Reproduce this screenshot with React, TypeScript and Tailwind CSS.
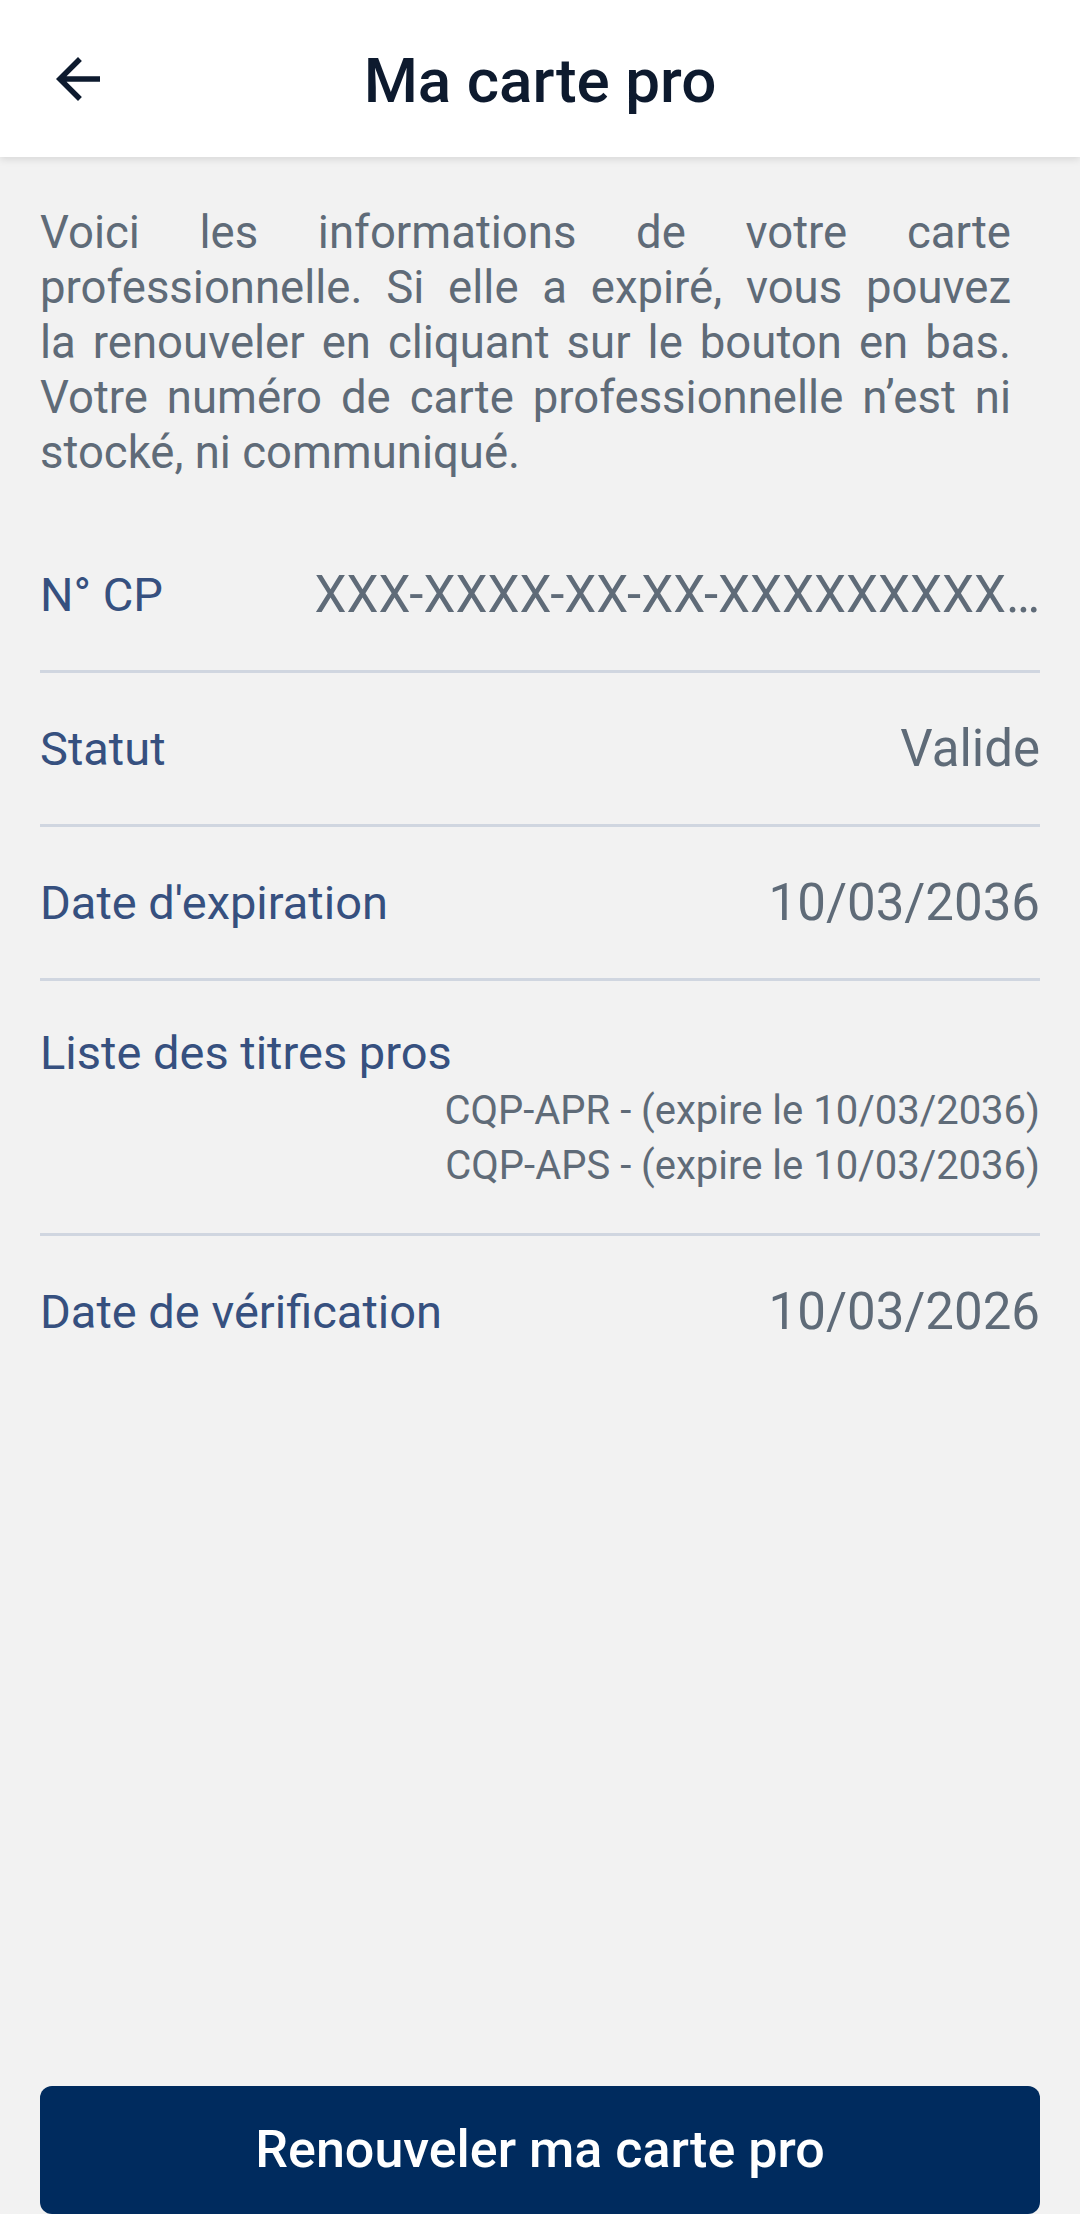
import React from 'react';

type Row = {
  label: string;
  value?: string;
  items?: string[];
  wide?: boolean;
};

const rows: Row[] = [
  { label: 'N° CP', value: 'XXX-XXXX-XX-XX-XXXXXXXXX…', wide: true },
  { label: 'Statut', value: 'Valide' },
  { label: "Date d'expiration", value: '10/03/2036' },
  {
    label: 'Liste des titres pros',
    items: ['CQP-APR - (expire le 10/03/2036)', 'CQP-APS - (expire le 10/03/2036)'],
  },
  { label: 'Date de vérification', value: '10/03/2026' },
];

function BackArrow() {
  return (
    <svg viewBox="0 0 24 24" className="w-[66px] h-[66px]" fill="#0d1a2e">
      <path d="M20 11H7.83l5.59-5.59L12 4l-8 8 8 8 1.41-1.41L7.83 13H20v-2z" />
    </svg>
  );
}

export default function App() {
  return (
    <div
      className="w-[1080px] h-[2214px] flex flex-col bg-[#f2f2f2] overflow-hidden"
      style={{ fontFamily: 'Roboto, "Noto Sans", sans-serif' }}
    >
      <header className="relative z-10 h-[157px] shrink-0 bg-white flex items-center justify-center shadow-[0_2px_8px_rgba(0,0,0,0.12)]">
        <button className="absolute left-[45px] top-[46px]" aria-label="Retour">
          <BackArrow />
        </button>
        <h1 className="text-[62px] leading-none font-medium text-[#0d1a2e] mt-[4px]">Ma carte pro</h1>
      </header>

      <main className="flex-1 px-[40px]">
        <p className="pt-[48px] pr-[29px] text-[45.5px] leading-[55px] text-[#5f6b78] text-justify">
          Voici les informations de votre carte professionnelle. Si elle a expiré, vous pouvez
          la{'\u00a0'}renouveler en cliquant sur le bouton en bas. Votre numéro de carte
          professionnelle n’est ni stocké, ni communiqué.
        </p>

        <div className="mt-[39px]">
          {rows.map((row, i) => (
            <div key={row.label}>
              {row.items ? (
                <div className="pt-[44px] pb-[40px]">
                  <div className="text-[47px] leading-[55px] text-[#36507f]">{row.label}</div>
                  <div className="mt-[3px] flex flex-col items-end">
                    {row.items.map((it) => (
                      <div key={it} className="text-[40px] leading-[55px] text-[#5f6b78]">
                        {it}
                      </div>
                    ))}
                  </div>
                </div>
              ) : (
                <div className="py-[48px] flex items-center justify-between h-[151px]">
                  <div
                    className={
                      row.wide
                        ? 'w-[260px] shrink-0 text-[47px] leading-[55px] text-[#36507f]'
                        : 'shrink-0 text-[47px] leading-[55px] text-[#36507f]'
                    }
                  >
                    {row.label}
                  </div>
                  <div className="whitespace-nowrap text-right text-[51px] leading-[60px] text-[#5f6b78]">
                    {row.value}
                  </div>
                </div>
              )}
              {i < rows.length - 1 && <div className="h-[3px] bg-[#d0d6e0]" />}
            </div>
          ))}
        </div>
      </main>

      <div className="px-[40px] shrink-0">
        <button className="w-full h-[128px] rounded-[12px] bg-[#002b5e] text-white text-[52px] font-medium flex items-center justify-center">
          Renouveler ma carte pro
        </button>
      </div>
    </div>
  );
}
